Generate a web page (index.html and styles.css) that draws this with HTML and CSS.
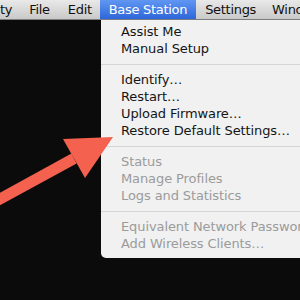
FILE: index.html
```html
<!DOCTYPE html>
<html lang="en">
<head>
<meta charset="UTF-8" />
<title>Base Station menu</title>
<link rel="stylesheet" href="styles.css">
</head>
<body>
<div class="menubar">
    <span class="bar-item cut">ty</span>
    <span class="bar-item">File</span>
    <span class="bar-item edit">Edit</span>
    <span class="bar-item active">Base Station</span>
    <span class="bar-item settings">Settings</span>
    <span class="bar-item">Window</span>
</div>
<div class="stage">
    <ul class="menu">
        <li>Assist Me</li>
        <li>Manual Setup</li>
        <li class="sep"></li>
        <li>Identify…</li>
        <li>Restart…</li>
        <li>Upload Firmware…</li>
        <li>Restore Default Settings…</li>
        <li class="sep"></li>
        <li class="off">Status</li>
        <li class="off">Manage Profiles</li>
        <li class="off">Logs and Statistics</li>
        <li class="sep"></li>
        <li class="off">Equivalent Network Password…</li>
        <li class="off">Add Wireless Clients…</li>
    </ul>
</div>

<!-- callout arrow drawn over the screen -->
<svg class="arrow" width="300" height="300" viewBox="0 0 300 300">
    <polygon points="-12.6,199.6 71.4,153.6 76.6,163.4 -7.4,209.4" fill="#f4614f"/>
    <polygon points="63,139 113,137 85,178" fill="#f4614f"/>
</svg>
</body>
</html>
```

FILE: styles.css
```css
body {
    margin: 0;
    width: 300px;
    height: 300px;
    overflow: hidden;
    position: relative;
    background: #0b0b0b;
    font-family: "DejaVu Sans", sans-serif;
}
.menubar {
    display: flex;
    height: 20px;
    background: linear-gradient(#e9e9e9, #c9c9c9);
    border-bottom: 1px solid #7d7d7d;
    box-sizing: border-box;
    white-space: nowrap;
    font-size: 13px;
    line-height: 19px;
    letter-spacing: -0.3px;
    color: #111;
}
.bar-item {
    padding: 0 9px;
}
.bar-item.cut {
    padding: 0 8px 0 0;
}
.bar-item.edit {
    padding-right: 8px;
}
.bar-item.settings {
    padding-right: 7px;
}
.bar-item.active {
    background: linear-gradient(#6197f2, #2d66d9);
    color: #fff;
}
.stage {
    display: flex;
    padding-left: 101px;
}
.menu {
    margin: 0;
    padding: 3px 0 6px;
    list-style: none;
    width: 230px;
    flex-shrink: 0;
    background: #f1f1f1;
    border-bottom-left-radius: 5px;
    font-size: 13px;
    letter-spacing: -0.1px;
    white-space: nowrap;
    color: #151515;
}
.menu li {
    height: 17px;
    line-height: 18px;
    padding-left: 20px;
}
.menu li.off {
    color: #9b9b9b;
}
.menu li.sep {
    height: 1px;
    padding: 0;
    margin: 7px 0 6px;
    background: #d6d6d6;
}
.arrow {
    position: absolute;
    left: 0;
    top: 0;
}
```
